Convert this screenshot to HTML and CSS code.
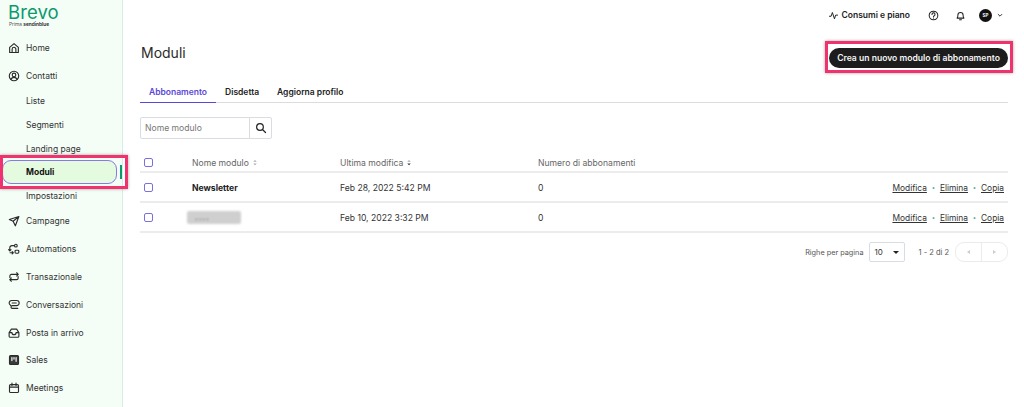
FILE: index.html
```html
<!DOCTYPE html>
<html lang="it">
<head>
<meta charset="utf-8">
<title>Moduli</title>
<link rel="stylesheet" href="styles.css">
</head>
<body>
<div class="app">
  <aside class="sidebar">
    <div class="logo">
      <div class="logo-name">Brevo</div>
      <div class="logo-sub">Prima <b>sendinblue</b></div>
    </div>
    <nav class="nav">
      <a class="item"><svg class="ico" viewBox="0 0 16 16"><path d="M2.200 7.200 8 2.200l5.800 5V14H2.200zM5.500 14V9.500a2.500 2.500 0 0 1 5 0V14"/></svg>Home</a>
      <a class="item"><svg class="ico" viewBox="0 0 16 16"><circle cx="8" cy="8" r="6.300"/><circle cx="8" cy="6.600" r="2.400"/><path d="M3.800 12.500C4.800 10.700 6.200 9.900 8 9.900s3.200.8 4.200 2.600"/></svg>Contatti</a>
      <div class="subs">
        <a class="sub">Liste</a>
        <a class="sub">Segmenti</a>
        <a class="sub">Landing page</a>
        <a class="sub active"><span class="sub-label">Moduli</span><span class="marker"></span><span class="hl hl-nav"></span></a>
        <a class="sub">Impostazioni</a>
      </div>
      <a class="item"><svg class="ico" viewBox="0 0 16 16"><path d="M14.500 2 1.800 6l5 2.400 3 6zM14.500 2 6.800 8.400"/></svg>Campagne</a>
      <a class="item"><svg class="ico" viewBox="0 0 16 16"><circle cx="10.500" cy="3.500" r="1.800"/><rect x="9.400" y="9.600" width="5" height="4" rx="1.200"/><path d="M8.500 3.500H5.200a2.800 2.800 0 0 0-2.800 2.800v4.200M.8 8.800l1.600 1.800L4 8.800M2.800 13h4M5.600 11.500 7 13l-1.400 1.500"/></svg>Automations</a>
      <a class="item"><svg class="ico" viewBox="0 0 16 16"><path d="M2.500 8.500V6.500a2 2 0 0 1 2-2h9M11.500 2.300l2.200 2.200-2.200 2.200M13.500 7.500v2a2 2 0 0 1-2 2h-9M4.500 9.300l-2.200 2.200 2.200 2.200"/></svg>Transazionale</a>
      <a class="item"><svg class="ico" viewBox="0 0 16 16"><path d="M5 2h6.500a3.300 3.300 0 0 1 0 6.800H5.800a1.700 1.700 0 0 0 0 3.700H13M5 2a3.400 3.400 0 0 0-1.500 6.500"/><path d="M5.500 5.400h5.500"/></svg>Conversazioni</a>
      <a class="item"><svg class="ico" viewBox="0 0 16 16"><path d="M4.500 2.800h7L14.500 7.500v4.700a1.500 1.500 0 0 1-1.500 1.500H3a1.500 1.500 0 0 1-1.500-1.500V7.500zM1.500 7.500h3.800a2.700 2.700 0 0 0 5.400 0h3.800"/></svg>Posta in arrivo</a>
      <a class="item"><svg class="ico" viewBox="0 0 16 16"><rect class="solid" x="2" y="2" width="12" height="12" rx="1.500"/><path class="cut" d="M5.200 4.800v4M8 4.800v2M10.800 4.800v5"/></svg>Sales</a>
      <a class="item"><svg class="ico" viewBox="0 0 16 16"><rect x="2" y="3.500" width="12" height="10.500" rx="1.500"/><path d="M2 6.800h12M5.300 1.500v3.300M10.700 1.500v3.300"/></svg>Meetings</a>
    </nav>
  </aside>

  <main class="main">
    <header class="topbar">
      <span class="plan"><svg class="ico-s" viewBox="0 0 12 12"><path d="M.6 7h2.200L4.500 2 7.300 10.500 8.800 5.500h2.600"/></svg>Consumi e piano</span>
      <svg class="ico-t help" viewBox="0 0 16 16"><circle cx="8" cy="8" r="6.300"/><path d="M5.800 6.400A2.200 2.200 0 1 1 9 8.300c-.7.400-1 .8-1 1.500M8 11.500v.3"/></svg>
      <svg class="ico-t bell" viewBox="0 0 16 16"><path d="M3 11.800c1-1 1.200-2.300 1.200-4.300a3.800 3.800 0 0 1 7.600 0c0 2 .2 3.300 1.200 4.300zM6.600 14.300h2.800"/></svg>
      <span class="avatar">SP</span>
      <svg class="chev" viewBox="0 0 10 10"><path d="M1.500 3.500 5 7l3.500-3.500"/></svg>
    </header>

    <div class="title-row">
      <h1 class="title">Moduli</h1>
      <button class="cta">Crea un nuovo modulo di abbonamento<span class="hl hl-cta"></span></button>
    </div>

    <div class="tabs">
      <a class="tab current">Abbonamento</a>
      <a class="tab">Disdetta</a>
      <a class="tab">Aggiorna profilo</a>
    </div>

    <div class="search">
      <span class="search-input">Nome modulo</span>
      <span class="search-btn"><svg viewBox="0 0 14 14"><circle cx="5.800" cy="5.800" r="3.900"/><path d="m8.700 8.700 3.600 3.600"/></svg></span>
    </div>

    <div class="table">
      <div class="row head">
        <span class="c-check"><span class="check"></span></span>
        <span class="c-name">Nome modulo <svg class="sort" viewBox="0 0 6 8"><path d="M1 3 3 1l2 2zM1 5l2 2 2-2z"/></svg></span>
        <span class="c-date">Ultima modifica <svg class="sort dark" viewBox="0 0 6 8"><path class="off" d="M1 3 3 1l2 2z"/><path d="M1 5l2 2 2-2z"/></svg></span>
        <span class="c-num">Numero di abbonamenti</span>
      </div>
      <div class="row">
        <span class="c-check"><span class="check"></span></span>
        <span class="c-name strong">Newsletter</span>
        <span class="c-date">Feb 28, 2022 5:42 PM</span>
        <span class="c-num">0</span>
        <span class="c-act"><a>Modifica</a><i>•</i><a>Elimina</a><i>•</i><a>Copia</a></span>
      </div>
      <div class="row">
        <span class="c-check"><span class="check"></span></span>
        <span class="c-name"><span class="redact">....</span></span>
        <span class="c-date">Feb 10, 2022 3:32 PM</span>
        <span class="c-num">0</span>
        <span class="c-act"><a>Modifica</a><i>•</i><a>Elimina</a><i>•</i><a>Copia</a></span>
      </div>
    </div>

    <div class="pager">
      <span>Righe per pagina</span>
      <span class="select">10<span class="caret"></span></span>
      <span class="range">1 - 2 di 2</span>
      <span class="pbtns">
        <span class="pbtn"><span class="tri left"></span></span>
        <span class="pbtn"><span class="tri right"></span></span>
      </span>
    </div>
  </main>
</div>
</body>
</html>
```
FILE: styles.css
```css
* { box-sizing: border-box; }
html, body { margin: 0; height: 100%; overflow: hidden; background: #fff; }
body { font-family: Inter, "Liberation Sans", sans-serif; color: #1f1f1f; font-size: 8.600px; }
.app { display: flex; height: 407px; }

.sidebar { width: 123px; flex: none; background: #f4fdf6; border-right: 1px solid #d3f0e6; padding-left: 8px; }
.logo { height: 34px; padding: 2px 0 0 0; }
.logo-name { font-size: 18.500px; line-height: 20px; font-weight: 400; color: #0b996e; letter-spacing: .1px; }
.logo-sub { font-size: 4.800px; line-height: 5px; margin-left: 1px; color: #555; }
.logo-sub b { font-weight: 600; color: #222; }

.nav { display: flex; flex-direction: column; }
.item { display: flex; align-items: center; gap: 6px; height: 27.800px; font-size: 8.500px; color: #333; }
.ico { width: 12px; height: 12px; flex: none; fill: none; stroke: #2b2b2b; stroke-width: 1.500; stroke-linecap: round; stroke-linejoin: round; }
.ico .solid { fill: #3a3a3a; stroke: #2b2b2b; }
.ico .cut { stroke: #f4fdf6; stroke-width: 1.600; }
.subs { display: flex; flex-direction: column; }
.sub { display: flex; align-items: center; height: 23.600px; padding-left: 18px; font-size: 8.500px; color: #333; }
.sub.active { position: relative; font-weight: 700; color: #111; }
.sub.active::before { content: ""; position: absolute; left: -6px; right: 5px; top: 0; bottom: 0; background: #e4fbdf; border: 1px solid #8a78e8; border-radius: 9px; }
.sub-label { position: relative; }
.marker { position: absolute; left: 112px; top: 5px; width: 2px; height: 14px; background: #0b996e; }
.hl { position: absolute; border: 3px solid #f0336f; box-shadow: 0 0 3px rgba(0,0,0,.35); pointer-events: none; }
.hl-nav { left: -8px; top: -5px; width: 128px; height: 34px; }
.hl-cta { left: -4px; top: -7px; right: -5px; bottom: -5px; }

.main { flex: 1; min-width: 0; padding: 0 16px 0 17px; }
.topbar { display: flex; justify-content: flex-end; align-items: center; height: 30px; padding-right: 5px; }
.plan { display: flex; align-items: center; gap: 4px; font-size: 8.500px; font-weight: 600; color: #222; }
.ico-s { width: 9px; height: 9px; fill: none; stroke: #222; stroke-width: 1.300; stroke-linejoin: round; stroke-linecap: round; }
.ico-t { width: 11px; height: 11px; fill: none; stroke: #222; stroke-width: 1.500; stroke-linecap: round; stroke-linejoin: round; }
.help { margin-left: 18px; }
.bell { margin-left: 15.500px; }
.avatar { width: 13px; height: 13px; margin-left: 13.500px; border-radius: 50%; background: #111; color: #fff; font-size: 4.500px; font-weight: 700; display: flex; align-items: center; justify-content: center; }
.chev { width: 6px; height: 6px; margin-left: 5px; fill: none; stroke: #222; stroke-width: 1.500; }

.title-row { display: flex; justify-content: space-between; align-items: flex-start; height: 47px; }
.title { margin: 14px 0 0 1px; font-size: 14px; line-height: 18px; font-weight: 400; color: #2a2a2a; }
.cta { position: relative; border: none; height: 20px; width: 179px; margin-top: 18px; padding: 0; border-radius: 10px; background: #1d1d1d; color: #f5f5f5; font: 600 8.600px Inter, sans-serif; white-space: nowrap; }

.tabs { display: flex; height: 24px; margin-top: 2px; border-bottom: 1px solid #dcdcdc; font-size: 8.500px; font-weight: 600; }
.tab { padding: 0 9px; line-height: 26px; color: #222; height: 24px; }
.tab.current { color: #5a48d8; border-bottom: 1px solid #5a48d8; }

.search { display: flex; width: 132px; height: 22px; margin-top: 14px; border: 1px solid #d7dde3; border-radius: 2px; }
.search-input { flex: 1; padding-left: 4px; line-height: 21px; color: #777; }
.search-btn { width: 22px; border-left: 1px solid #d7dde3; display: flex; align-items: center; justify-content: center; }
.search-btn svg { width: 12px; height: 12px; fill: none; stroke: #222; stroke-width: 1.400; stroke-linecap: round; }

.table { margin-top: 14px; }
.row { display: flex; align-items: center; height: 30px; padding-top: 1px; border-bottom: 2px solid #ececec; color: #333; }
.row.head { height: 20px; color: #666; }
.c-check { width: 52px; padding-left: 4px; display: flex; flex: none; }
.check { width: 9px; height: 9px; border: 1px solid #7b70d8; border-radius: 2px; background: #fff; }
.c-name { width: 148px; flex: none; display: flex; align-items: center; gap: 3px; }
.c-date { width: 198px; flex: none; display: flex; align-items: center; gap: 3px; }
.c-num { width: 150px; flex: none; }
.c-act { margin-left: auto; padding-right: 4px; display: flex; align-items: center; font-size: 8.400px; }
.c-act a { text-decoration: underline; color: #333; }
.c-act i { font-style: normal; color: #2aa889; width: 13px; text-align: center; font-size: 6px; }
.strong { font-weight: 700; color: #222; }
.sort { width: 6px; height: 7px; fill: #aaa; }
.sort.dark { fill: #333; }
.sort .off { fill: #aaa; }
.redact { width: 54px; height: 13px; padding-left: 8px; background: #cfcfcf; border-radius: 2px; margin: 0 0 0 -5px; filter: blur(.8px); color: #444; font-size: 8px; font-weight: 700; line-height: 12px; letter-spacing: 1px; }

.pager { display: flex; justify-content: flex-end; align-items: center; height: 38px; font-size: 7.300px; color: #555; }
.select { display: flex; justify-content: space-between; align-items: center; width: 36px; height: 20px; margin-left: 5px; padding: 0 5px; border: 1px solid #d7dde3; border-radius: 2px; color: #333; font-size: 8px; }
.caret { width: 0; height: 0; border: 3px solid transparent; border-top: 3px solid #222; margin-top: 3px; }
.range { margin: 0 6px 0 14px; font-size: 7.500px; }
.pbtns { display: flex; width: 53px; height: 20px; border: 1px solid #e9ecef; border-radius: 9px; }
.pbtn { flex: 1; display: flex; align-items: center; justify-content: center; }
.pbtn:first-child { border-right: 1px solid #e9ecef; }
.tri { width: 0; height: 0; border: 2px solid transparent; }
.tri.left { border-right: 3px solid #ccc; border-left: 0; }
.tri.right { border-left: 3px solid #ccc; border-right: 0; }
```
